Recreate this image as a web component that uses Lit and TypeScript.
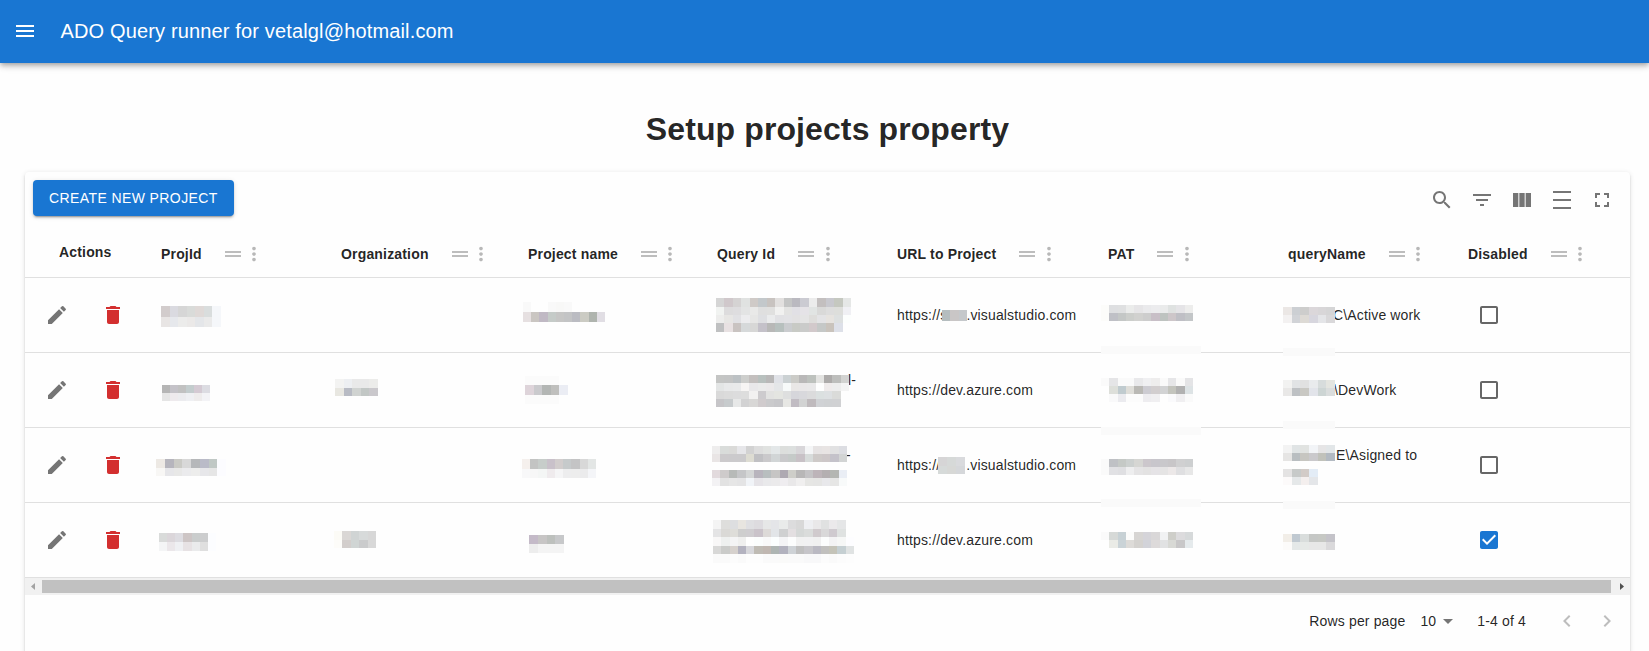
import { LitElement, html, css, svg, nothing } from "lit";
import { customElement, property } from "lit/decorators.js";

const ICONS: Record<string, string> = {
  menu: "M3 18h18v-2H3v2zm0-5h18v-2H3v2zm0-7v2h18V6H3z",
  search:
    "M15.5 14h-.79l-.28-.27C15.41 12.59 16 11.11 16 9.5 16 5.91 13.09 3 9.5 3S3 5.91 3 9.5 5.91 16 9.5 16c1.61 0 3.09-.59 4.23-1.57l.27.28v.79l5 4.99L20.49 19l-4.99-5zm-6 0C7.01 14 5 11.99 5 9.5S7.01 5 9.5 5 14 7.01 14 9.5 11.99 14 9.5 14z",
  filter: "M10 18h4v-2h-4v2zM3 6v2h18V6H3zm3 7h12v-2H6v2z",
  columns: "M14.67 5v14H9.33V5h5.34zm1 14H21V5h-5.33v14zm-7.34 0V5H3v14h5.33z",
  density: "M3 3h18v2H3zm0 16h18v2H3zm0-8h18v2H3z",
  fullscreen: "M7 14H5v5h5v-2H7v-3zm-2-4h2V7h3V5H5v5zm12 7h-3v2h5v-5h-2v3zM14 5v2h3v3h2V5h-5z",
  drag: "M20 9H4v2h16V9zM4 15h16v-2H4v2z",
  more: "M12 8c1.1 0 2-.9 2-2s-.9-2-2-2-2 .9-2 2 .9 2 2 2zm0 2c-1.1 0-2 .9-2 2s.9 2 2 2 2-.9 2-2-.9-2-2-2zm0 6c-1.1 0-2 .9-2 2s.9 2 2 2 2-.9 2-2-.9-2-2-2z",
  edit: "M3 17.25V21h3.75L17.81 9.94l-3.75-3.75L3 17.25zM20.71 7.04c.39-.39.39-1.02 0-1.41l-2.34-2.34a.9959.9959 0 0 0-1.41 0l-1.83 1.83 3.75 3.75 1.83-1.83z",
  trash: "M6 19c0 1.1.9 2 2 2h8c1.1 0 2-.9 2-2V7H6v12zM19 4h-3.5l-1-1h-5l-1 1H5v2h14V4z",
  unchecked: "M19 5v14H5V5h14m0-2H5c-1.1 0-2 .9-2 2v14c0 1.1.9 2 2 2h14c1.1 0 2-.9 2-2V5c0-1.1-.9-2-2-2z",
  checked:
    "M19 3H5c-1.11 0-2 .9-2 2v14c0 1.1.89 2 2 2h14c1.11 0 2-.9 2-2V5c0-1.1-.89-2-2-2zm-9 14l-5-5 1.41-1.41L10 14.17l7.59-7.59L19 8l-9 9z",
  dropdown: "M7 10l5 5 5-5z",
  left: "M15.41 7.41L14 6l-6 6 6 6 1.41-1.41L10.83 12z",
  right: "M10 6L8.59 7.41 13.17 12l-4.58 4.59L10 18l6-6z",
};

@customElement("mui-icon")
class MuiIcon extends LitElement {
  @property() name = "menu";
  static styles = css`
    :host { display: block; width: 24px; height: 24px; flex: none; }
    svg { display: block; width: 100%; height: 100%; fill: currentColor; }
  `;
  render() {
    return html`<svg viewBox="0 0 24 24"><path d=${ICONS[this.name]}></path></svg>`;
  }
}

interface Mosaic { x: number; w: number; ys: number[]; rows: string[]; }

// Redacted values: each row lists its tile colours from left to right.
const MOSAICS: Mosaic[] = [
  { x: 161, w: 60, ys: [306, 317, 327], rows: ["d2cccc dadae0 d6d6d6 d9dbd9 dfd9d7 d9dddd f5f7fa", "e8e5e4 e6e8ec ececeb ebe9e8 e4e6e9 eaeaea f5f7fa"] },
  { x: 162, w: 48, ys: [385, 393, 401], rows: ["b5b5b5 c4c2c8 c1c1c1 c3cccd d4cad3 dcdce2", "e5e5e5 eeeaed ececef eff0f3 eeecec f3f3f6"] },
  { x: 156, w: 70, ys: [459, 468, 476], rows: ["ede9e4 b6b5bd cacac5 d8d8d8 b6b8ba babbc8 c0c8c5 fcfcff", "f8f7f5 e6e6e9 e8e8e7 ebebed ededec e7e7ea e6e6e6 fcfcff"] },
  { x: 159, w: 57, ys: [533, 542, 551], rows: ["d9dbda dbd6da dddce1 cdc5c5 cacdcd cccdce fcfdff", "f4f5f6 ebe7ea eff0f3 e7e2e4 eaebec dfdfdf fcfdff"] },
  { x: 335, w: 43, ys: [379, 388, 396], rows: ["f3f3f2 edeff2 e9e9e9 e9e9e9 ececea", "e8e7e1 b8bbc4 d0d3d1 c2c7c5 cac8cc"] },
  { x: 334, w: 42, ys: [531, 540, 548], rows: ["fcfbf6 dad7d5 d0d4d4 d7dada d7d7d7", "fdfcf9 d3cecc d0d5d4 cacbcc d8d8d8"] },
  { x: 523, w: 82, ys: [302, 312, 322], rows: ["f9f9f9 - - f9f9f9 f8f8f7 f9f9f9 - - - -", "e6e0e1 cac6c2 c0b9c4 c5cbc8 c6c6c5 c3c4c5 bbbcc2 cbcbc3 afb4ae e1dee4"] },
  { x: 525, w: 43, ys: [376, 385, 395, 404], rows: ["fbfbfb fbfbfb fbfbfb fbfbfb -", "ded4da cacacd b3b6b4 bfbfbd ebedf4", "fbfbfb fbfbfb fbfbfb fbfbfb -"] },
  { x: 522, w: 74, ys: [459, 469, 478], rows: ["f5f0ed c3c4c3 c7cdca c9c1ca d2cdcd c6cacb c4c4c5 d8d8d8 e3e6e5", "f8f8f9 f7f7f7 f4f6f5 efebed f5f5f6 ededee ededed ebebec f4f5f8"] },
  { x: 529, w: 35, ys: [535, 544, 553], rows: ["c4bac8 c7c5c5 bdc0bd c7c8ca", "ededed f4f4f4 f4f4f4 f4f4f4"] },
  { x: 716, w: 135, ys: [298, 307, 315, 323, 332], rows: [
    "d5d5d5 d0c8cb d5d3d3 e0e2e1 cfcac7 c3c8cb c8c3c0 e2e0df c4c5c5 bab9c0 cbcbd2 ececec c3bfbf c8c8ce c5c8c0 e5e7e6",
    "f1f3f1 dddcdd dedddf e3e4e4 e9e9e8 dfdfdf e0e0df f1f1f0 e3e3e2 e1e0e5 e5e3e7 e1e4e3 d9d9d8 dddddd dddedb f0f0f4",
    "ededec e7e6e4 e1e1e4 ececee e6e6e5 dedfe2 eaebec e1e1e4 e2e2e5 e2e1e2 e4e4e4 dedddb e3e3e5 e6e3df dde0e0 fcfefd",
    "bfc0c1 e8e1e2 c9c3c1 d6d9da d7d7d6 c4c1c9 b8b8b7 b7c0be cacccf c8cac5 cacbca d2c9cb c5c8c7 c9c3bc dde0e8 -"] },
  { x: 716, w: 133, ys: [375, 383, 391, 399, 407], rows: [
    "c4c5c4 c3c4c4 bcc1c4 cdcecc c3bfbe b8c0be b9b8b8 e0e2e7 cbd1d3 cbcbc7 b9b8b8 bdc1bd e3e3e1 adabaa bdbebc d2d3d1",
    "e3e5e5 e8e9ea e9eaeb f7f5f4 e9e8ea ebebeb ebe9ea e4e6e8 f7fafa e9e7e6 e9e7e8 e9e8e9 fefefe efebeb ededed f4f4f4",
    "d9d9d9 dbdbdb dcdcdd dddddd f2f1f1 cdcbce e2e2e1 e4e5e1 dedfdf d6d6db d8d8dc dbdbdc dbe0e0 dde0e2 dadbd9 -",
    "c6c5c8 c7cbcd e7e8e8 d2d2d3 d8d7d6 d0cbcd cacacc c7c7ca e7e7e4 c1bcc3 d2d3d3 bfbabd d0d2d5 cfd1d3 d0d1d3 -"] },
  { x: 712, w: 135, ys: [446, 454, 462], rows: [
    "eeeded d9dcda dadad8 e6e6e9 d2d2d2 dddddd e0e2e0 e3e7e8 dcdedc dcdfde d8d6d9 f4f5f6 e6e3e3 e8e4e3 e1e1e2 dcdde2",
    "e9e5e5 cccacc cbcacc cbcacc dddcd2 c0c0c3 cac9cb d1d5d6 c9c9cb c5cac8 c8c1c6 d7dbda cecac8 cdc7c8 c4c2ca d2d4d4"] },
  { x: 712, w: 135, ys: [470, 478, 486], rows: [
    "e2dadd cecbcb b7bab8 c5c6c8 d4d6d6 b8b4bd b8bebf c6c5c4 aea9b2 cecec9 b8b7b7 c4c3c5 bdb4b9 b4afb1 b4b6b2 eaeef5",
    "f3f2f4 e2e2e2 e6e6e6 e4e4e5 f1f4f8 e6e4e8 e9e9eb ebeaeb efedf0 e9e8e9 f0efef e6e6e4 e5e5e4 e8e8eb e6e6e5 f8fafa"] },
  { x: 713, w: 141, ys: [520, 529, 537, 546, 554, 563], rows: [
    "f4f4f4 dededc dddee0 e8e5e0 dfdfe2 dddbdf e6e7e7 e4e5e8 e9ebea dcdcdd d8d8d8 eeeff2 e9e8e9 e0e1e1 ebe9eb e5e6e7 -",
    "e4e4e5 dad9d6 deddd9 cecece cfcdd0 cac3ca dddad8 e2e5e8 cfd0d1 e3dfe1 d5d8d7 dadcdb d0cacd d9d8d9 cfcacf dfe2e1 -",
    "f8f7f7 eef0ef f4f4f5 efefee fefefe fbfdfd f9f9f9 fbfefe f4f4f6 fcfdfd f1f1f1 f1f1f2 f0f0f0 fcfdfd f3f3f4 f6f7f6 fdfdff",
    "d8d8d7 cacbc9 d6d1cd b3b2bf d7d7db bfbbb4 c0b7b1 aeb5b3 b2b2be ced2d6 bfbfbf c6c5c9 bab9c2 c1c0be c4c3b8 c5cfd2 e0e3e3",
    "fafafa fafafa fcfcfc fafafa fdfdfd fdfdfd fafafa fafafa fafaf9 fafafa fafafa f8f8f9 f8f8f9 fcfcfc fafafa fcfcfc fdfdfd"] },
  { x: 942, w: 25, ys: [310, 321], rows: ["b5bdbf c9c6c6 c5c8cb"] },
  { x: 938, w: 27, ys: [457, 466, 474], rows: ["d6d5d6 d6d9d8 d9dadd", "d6dad9 d7d8d6 d5d7da"] },
  { x: 1101, w: 92, ys: [305, 313, 321], rows: ["fcfcfa dedfe1 dfe0e1 ebeceb e6e5e7 eaeaec ececee eaebeb dfe2e1 e5e4e7 ededec", "fcfcfa bfc0c6 c4c7c6 cccecb d1d1cf cdcdcd c8bfc7 bec3c0 cdc6c9 bfbfc5 c3c6c8"] },
  { x: 1101, w: 92, ys: [378, 386, 394, 402], rows: ["fafafa e5e5e7 fafafa fafafa e9e9eb f0f0f2 eeeded fafafa e6e6e8 fafafa e4e4e6", "- dddfda c0cbcf dfded9 bab9b5 cdccd2 d2cecf d2d3d4 c3c4bd b1b1b1 dde3e5", "- f9f9fa ebebef fcfcfc fcfcfc eeedf0 f0eff1 fefefe fafafc f0eff1 fafafa"] },
  { x: 1101, w: 92, ys: [459, 467, 475], rows: ["fafafa bfc1c5 c5c9c6 ccd0cf d6d6d3 ccc7cc c8c6cc c9c8cb c8c6c8 d0d0d1 cdcfd0", "fafafa e1e1e4 dfdfe2 eeeeef e5e4e5 e3e2e2 e5e3e6 e5e4e4 ece8e8 dfdfe1 e7e7e7"] },
  { x: 1101, w: 92, ys: [532, 540, 548], rows: ["fafafa d6d9d7 c7d1d5 fcfcfb d7d5d3 d5d4d9 d9d7d8 f1f2f3 cecec9 dcdbdd d6d9da", "- eaebe6 cad3d7 dddbd8 d4d2cf d2d3d9 dddada e1e2e3 d8d9d5 c8c7c8 e5eaec"] },
  { x: 1101, w: 100, ys: [346, 354], rows: ["fafafa"] },
  { x: 1101, w: 100, ys: [427, 435], rows: ["fafafa"] },
  { x: 1101, w: 100, ys: [499, 507], rows: ["fafafa"] },
  { x: 1283, w: 52, ys: [307, 315, 323], rows: ["ebe7e5 cccfd3 cdcdcc dbd7da d8d6d8 d5d5d6", "f3f1f1 d1d3d7 dddad5 d7d6de e4e5e8 d9d8da"] },
  { x: 1283, w: 52, ys: [380, 388, 396], rows: ["f2f2f1 e1e3e5 e1e1e1 e9ebed d7dcdc e4e5e0", "e9e8e7 bec1c4 c9c8c3 e2e4ea cdd5d4 dadddd"] },
  { x: 1283, w: 52, ys: [445, 453, 461], rows: ["f3f3f3 e0e4e5 e1e3e1 f2f4f7 e6e5e6 e2e6e8", "e6e5e4 b9bec1 c7c6c1 cac9cc c1c2bb b3bac2"] },
  { x: 1283, w: 35, ys: [469, 477, 485], rows: ["e4e3e3 c7cac9 d2cbc7 e3ecf6", "fcfafa e5e8e9 f4efee e4e6e9"] },
  { x: 1283, w: 52, ys: [534, 542, 550], rows: ["f2eee8 c0c9d1 d9dddc c5c7c5 c6c8c4 c4c3c9", "fcfbfa e4e8e8 e6e9e7 e7e7e7 e7e7e7 dad9db"] },
  { x: 1283, w: 52, ys: [348, 356], rows: ["fafafa"] },
  { x: 1283, w: 52, ys: [421, 429], rows: ["fafafa"] },
  { x: 1283, w: 52, ys: [501, 509], rows: ["fafafa"] },
];

@customElement("redaction-layer")
class RedactionLayer extends LitElement {
  static styles = css`
    :host { display: block; }
    svg { display: block; width: 1605px; height: 479px; shape-rendering: crispEdges; }
  `;
  render() {
    return html`<svg viewBox="25 172 1605 479">
      ${MOSAICS.map((m) =>
        m.rows.map((row, r) => {
          const tiles = row.split(" ");
          const edge = (i: number) => m.x + Math.round((m.w * i) / tiles.length);
          return tiles.map((c, i) =>
            c === "-"
              ? nothing
              : svg`<rect x=${edge(i)} y=${m.ys[r]} width=${edge(i + 1) - edge(i)} height=${m.ys[r + 1] - m.ys[r]} fill=${"#" + c}></rect>`
          );
        })
      )}
    </svg>`;
  }
}

const COLUMNS = ["ProjId", "Organization", "Project name", "Query Id", "URL to Project", "PAT", "queryName", "Disabled"];

interface Row { id: string; idKind: string; url: string; mask: number; host: string; query: string; queryKind: string; disabled: boolean; }

const ROWS: Row[] = [
  { id: "", idKind: "", url: "https://s", mask: 19, host: ".visualstudio.com", query: "C\\Active work", queryKind: "q1", disabled: false },
  { id: "l-", idKind: "id2", url: "https://dev.azure.com", mask: 0, host: "", query: "\\DevWork", queryKind: "q2", disabled: false },
  { id: "-", idKind: "id3", url: "https://", mask: 26, host: ".visualstudio.com", query: "E\\Asigned to", queryKind: "q3", disabled: false },
  { id: "", idKind: "", url: "https://dev.azure.com", mask: 0, host: "", query: "", queryKind: "", disabled: true },
];

@customElement("app-root")
class AppRoot extends LitElement {
  static styles = css`
    :host {
      display: block; height: 651px; overflow: hidden; background: #fefefe;
      font-family: "Liberation Sans", Arial, sans-serif; font-size: 14px; color: rgba(0, 0, 0, 0.87);
    }
    * { box-sizing: border-box; }
    .bar {
      display: flex; align-items: center; height: 63px; padding: 0 13px 1px; gap: 23.5px;
      background: #1976d2; color: #fff; position: relative;
      box-shadow: 0 2px 4px -1px rgba(0,0,0,.2), 0 4px 5px 0 rgba(0,0,0,.14), 0 1px 10px 0 rgba(0,0,0,.12);
    }
    .brand { font-size: 20px; letter-spacing: 0.0075em; line-height: 32px; white-space: nowrap; }
    .main { padding: 46px 19px 0 25px; }
    h1 { margin: 0 0 23px; font-size: 32px; line-height: 40px; font-weight: 700; letter-spacing: 0.1px; text-align: center; }
    .card {
      position: relative; height: 520px; background: #fefefe; border-radius: 4px;
      box-shadow: 0 3px 1px -2px rgba(0,0,0,.2), 0 2px 2px 0 rgba(0,0,0,.14), 0 1px 5px 0 rgba(0,0,0,.12);
    }
    .tools { display: flex; justify-content: space-between; align-items: flex-start; height: 56px; padding: 8px 16px 0 8px; }
    .create {
      height: 36px; padding: 0 16px; border: 0; border-radius: 4px; background: #1976d2; color: #fff;
      font: 500 14px/24px "Liberation Sans", Arial, sans-serif; letter-spacing: 0.02857em; white-space: nowrap;
      box-shadow: 0 3px 1px -2px rgba(0,0,0,.2), 0 2px 2px 0 rgba(0,0,0,.14), 0 1px 5px 0 rgba(0,0,0,.12);
    }
    .icons { display: flex; gap: 16px; padding-top: 8px; color: #757575; }
    .table { overflow: hidden; }
    .row {
      display: grid; grid-template-columns: 120px 180px 187px 189px 180px 211px 180px 180px 178px;
      height: 75px; border-bottom: 1px solid #e0e0e0; align-items: center;
    }
    .head { height: 50px; font-weight: 700; letter-spacing: 0.17px; padding-top: 2px; }
    .cell { padding-left: 16px; display: flex; align-items: center; white-space: nowrap; line-height: 20px; letter-spacing: 0.01071em; }
    .head .cell { letter-spacing: inherit; }
    .head .first { padding: 0 0 4px 34px; }
    .drag { margin-left: 19px; color: #bdbdbd; }
    .more { margin-left: -1.5px; margin-right: -24px; color: #b8b8b8; width: 22px; height: 22px; }
    .actions { padding-left: 20px; gap: 32px; color: #757575; }
    .trash { color: #d32f2f; }
    .gap { flex: none; }
    .id2 { padding: 0 0 20px 147px; }
    .id3 { padding: 0 0 20px 145px; }
    .q1 { padding-left: 61px; }
    .q2 { padding-left: 62px; }
    .q3 { padding: 0 0 20px 64px; }
    .box { padding-left: 25px; color: #666; }
    .on { color: #1976d2; }
    .scroll { display: flex; align-items: center; height: 17px; background: #f1f1f1; }
    .arrow { width: 17px; height: 17px; flex: none; }
    .end { width: 19px; }
    .thumb { flex: 1; height: 13px; background: #c1c1c1; }
    .pager { display: flex; align-items: center; height: 52px; padding-right: 11px; justify-content: flex-end; letter-spacing: 0.01071em; }
    .ten { margin-left: 15px; }
    .caret { color: #757575; }
    .range { margin-left: 17px; margin-right: 29px; }
    .nav { color: #bdbdbd; }
    .nav + .nav { margin-left: 16px; }
    .mask { position: absolute; left: 0; top: 0; pointer-events: none; }
  `;

  render() {
    return html`
      <header class="bar"><mui-icon name="menu"></mui-icon><div class="brand">ADO Query runner for vetalgl@hotmail.com</div></header>
      <main class="main">
        <h1>Setup projects property</h1>
        <section class="card">
          <div class="tools">
            <button class="create">CREATE NEW PROJECT</button>
            <div class="icons">
              ${["search", "filter", "columns", "density", "fullscreen"].map((n) => html`<mui-icon name=${n}></mui-icon>`)}
            </div>
          </div>
          <div class="table">
            <div class="row head">
              <div class="cell first">Actions</div>
              ${COLUMNS.map((c) => html`<div class="cell">${c}<mui-icon class="drag" name="drag"></mui-icon><mui-icon class="more" name="more"></mui-icon></div>`)}
            </div>
            ${ROWS.map(
              (r) => html`<div class="row">
                <div class="cell actions"><mui-icon name="edit"></mui-icon><mui-icon class="trash" name="trash"></mui-icon></div>
                <div></div><div></div><div></div>
                <div class="cell ${r.idKind}">${r.id}</div>
                <div class="cell">${r.url}<span class="gap" style="width:${r.mask}px"></span>${r.host}</div>
                <div></div>
                <div class="cell ${r.queryKind}">${r.query}</div>
                <div class="cell box ${r.disabled ? "on" : ""}"><mui-icon name=${r.disabled ? "checked" : "unchecked"}></mui-icon></div>
              </div>`
            )}
          </div>
          <div class="scroll">
            <svg class="arrow" viewBox="0 0 17 17"><path d="M10 5v7L6 8.5z" fill="#a3a3a3"></path></svg>
            <div class="thumb"></div>
            <svg class="arrow end" viewBox="0 0 19 17"><path d="M9 5v7l4-3.5z" fill="#505050"></path></svg>
          </div>
          <div class="pager">
            <span>Rows per page</span><span class="ten">10</span><mui-icon class="caret" name="dropdown"></mui-icon>
            <span class="range">1-4 of 4</span>
            <mui-icon class="nav" name="left"></mui-icon><mui-icon class="nav" name="right"></mui-icon>
          </div>
          <redaction-layer class="mask"></redaction-layer>
        </section>
      </main>
    `;
  }
}
